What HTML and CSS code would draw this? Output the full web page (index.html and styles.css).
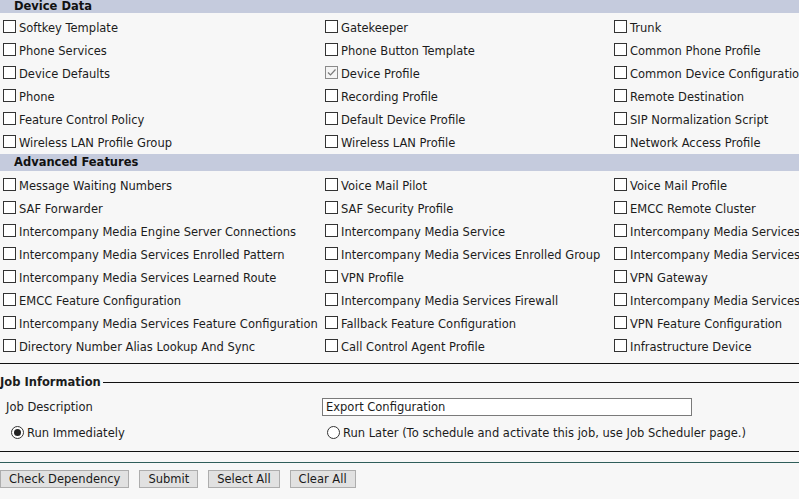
FILE: index.html
```html
<!DOCTYPE html>
<html>
<head>
<meta charset="utf-8">
<link rel="stylesheet" href="styles.css">
</head>
<body>
<div class="page">
  <div class="section">
    <div class="bar top-bar">Device Data</div>
    <div class="grid">
      <label class="item"><span class="cb"></span>Softkey Template</label>
      <label class="item"><span class="cb"></span>Gatekeeper</label>
      <label class="item"><span class="cb"></span>Trunk</label>
      <label class="item"><span class="cb"></span>Phone Services</label>
      <label class="item"><span class="cb"></span>Phone Button Template</label>
      <label class="item"><span class="cb"></span>Common Phone Profile</label>
      <label class="item"><span class="cb"></span>Device Defaults</label>
      <label class="item"><span class="cb checked"><svg width="11" height="11" viewBox="0 0 11 11"><path d="M2 5.5 L4.5 8 L9.5 2.5" fill="none" stroke="#7a7a7a" stroke-width="1.2"/></svg></span>Device Profile</label>
      <label class="item"><span class="cb"></span>Common Device Configuration</label>
      <label class="item"><span class="cb"></span>Phone</label>
      <label class="item"><span class="cb"></span>Recording Profile</label>
      <label class="item"><span class="cb"></span>Remote Destination</label>
      <label class="item"><span class="cb"></span>Feature Control Policy</label>
      <label class="item"><span class="cb"></span>Default Device Profile</label>
      <label class="item"><span class="cb"></span>SIP Normalization Script</label>
      <label class="item"><span class="cb"></span>Wireless LAN Profile Group</label>
      <label class="item"><span class="cb"></span>Wireless LAN Profile</label>
      <label class="item"><span class="cb"></span>Network Access Profile</label>
    </div>
  </div>
  <div class="section">
    <div class="bar">Advanced Features</div>
    <div class="grid">
      <label class="item"><span class="cb"></span>Message Waiting Numbers</label>
      <label class="item"><span class="cb"></span>Voice Mail Pilot</label>
      <label class="item"><span class="cb"></span>Voice Mail Profile</label>
      <label class="item"><span class="cb"></span>SAF Forwarder</label>
      <label class="item"><span class="cb"></span>SAF Security Profile</label>
      <label class="item"><span class="cb"></span>EMCC Remote Cluster</label>
      <label class="item"><span class="cb"></span>Intercompany Media Engine Server Connections</label>
      <label class="item"><span class="cb"></span>Intercompany Media Service</label>
      <label class="item"><span class="cb"></span>Intercompany Media Services</label>
      <label class="item"><span class="cb"></span>Intercompany Media Services Enrolled Pattern</label>
      <label class="item"><span class="cb"></span>Intercompany Media Services Enrolled Group</label>
      <label class="item"><span class="cb"></span>Intercompany Media Services</label>
      <label class="item"><span class="cb"></span>Intercompany Media Services Learned Route</label>
      <label class="item"><span class="cb"></span>VPN Profile</label>
      <label class="item"><span class="cb"></span>VPN Gateway</label>
      <label class="item"><span class="cb"></span>EMCC Feature Configuration</label>
      <label class="item"><span class="cb"></span>Intercompany Media Services Firewall</label>
      <label class="item"><span class="cb"></span>Intercompany Media Services</label>
      <label class="item"><span class="cb"></span>Intercompany Media Services Feature Configuration</label>
      <label class="item"><span class="cb"></span>Fallback Feature Configuration</label>
      <label class="item"><span class="cb"></span>VPN Feature Configuration</label>
      <label class="item"><span class="cb"></span>Directory Number Alias Lookup And Sync</label>
      <label class="item"><span class="cb"></span>Call Control Agent Profile</label>
      <label class="item"><span class="cb"></span>Infrastructure Device</label>
    </div>
  </div>
  <div class="rule"></div>
  <div class="job">
    <div class="legend"><span class="legend-text">Job Information</span><span class="legend-line"></span></div>
    <div class="job-row">
      <span class="job-label">Job Description</span>
      <span class="textbox">Export Configuration</span>
    </div>
    <div class="radio-row">
      <span class="radio-item first-radio"><span class="radio on"></span>Run Immediately</span>
      <span class="radio-item"><span class="radio"></span>Run Later (To schedule and activate this job, use Job Scheduler page.)</span>
    </div>
  </div>
  <div class="teal"></div>
  <div class="buttons">
    <span class="btn">Check Dependency</span>
    <span class="btn">Submit</span>
    <span class="btn">Select All</span>
    <span class="btn">Clear All</span>
  </div>
</div>
</body>
</html>
```

FILE: styles.css
```css
html, body {
  margin: 0;
  padding: 0;
  background: #f7f7f7;
  overflow: hidden;
}
body {
  font-family: "DejaVu Sans", Verdana, sans-serif;
  font-size: 11.5px;
  color: #1c1c1c;
  width: 799px;
  height: 499px;
}
.page {
  width: 960px;
}
.bar {
  height: 17px;
  line-height: 17px;
  background: #c5cbdd;
  font-weight: bold;
  padding-left: 14px;
  color: #111;
}
.bar.top-bar {
  height: 13px;
  line-height: 12px;
}
.grid {
  display: grid;
  grid-template-columns: 322px 289px 349px;
  grid-auto-rows: 23px;
  padding-top: 3px;
}
.item {
  display: flex;
  align-items: center;
  padding-left: 3px;
  white-space: nowrap;
}
.cb {
  width: 11px;
  height: 11px;
  border: 1px solid #333;
  background: #fff;
  margin-right: 3px;
  margin-top: -2px;
  flex: none;
  display: flex;
}
.cb.checked {
  border-color: #8a8a8a;
  background: #f4f4f4;
}
.rule {
  margin-top: 5px;
  border-top: 1px solid #111;
}
.job {
  padding-top: 10px;
  padding-bottom: 2px;
  border-bottom: 1px solid #111;
}
.legend {
  display: flex;
  align-items: center;
  height: 16px;
}
.legend-text {
  font-weight: bold;
  padding-right: 2px;
}
.legend-line {
  flex: 1;
  border-top: 1px solid #111;
}
.job-row {
  display: grid;
  grid-template-columns: 322px 370px;
  align-items: center;
  margin-top: 7px;
  height: 20px;
}
.job-label {
  padding-left: 6px;
}
.textbox {
  height: 16px;
  line-height: 16px;
  border: 1px solid #7a7a7a;
  background: #fff;
  padding-left: 3px;
}
.radio-row {
  display: grid;
  grid-template-columns: 327px auto;
  height: 32px;
  align-items: center;
}
.radio-item {
  display: flex;
  align-items: center;
  white-space: nowrap;
}
.first-radio {
  padding-left: 11px;
}
.radio {
  width: 11px;
  height: 11px;
  border: 1px solid #333;
  border-radius: 50%;
  background: #fff;
  margin-right: 3px;
  margin-top: -2px;
  position: relative;
  flex: none;
}
.radio.on::after {
  content: "";
  position: absolute;
  left: 2px;
  top: 2px;
  width: 7px;
  height: 7px;
  border-radius: 50%;
  background: #222;
}
.teal {
  margin-top: 10px;
  border-top: 1px solid #2f5e5a;
}
.buttons {
  display: flex;
  gap: 10px;
  padding-top: 7px;
}
.btn {
  display: inline-block;
  height: 16px;
  line-height: 16px;
  padding: 0 8px;
  background: #e1e1e1;
  border: 1px solid #adadad;
  color: #1a1a1a;
}
```
